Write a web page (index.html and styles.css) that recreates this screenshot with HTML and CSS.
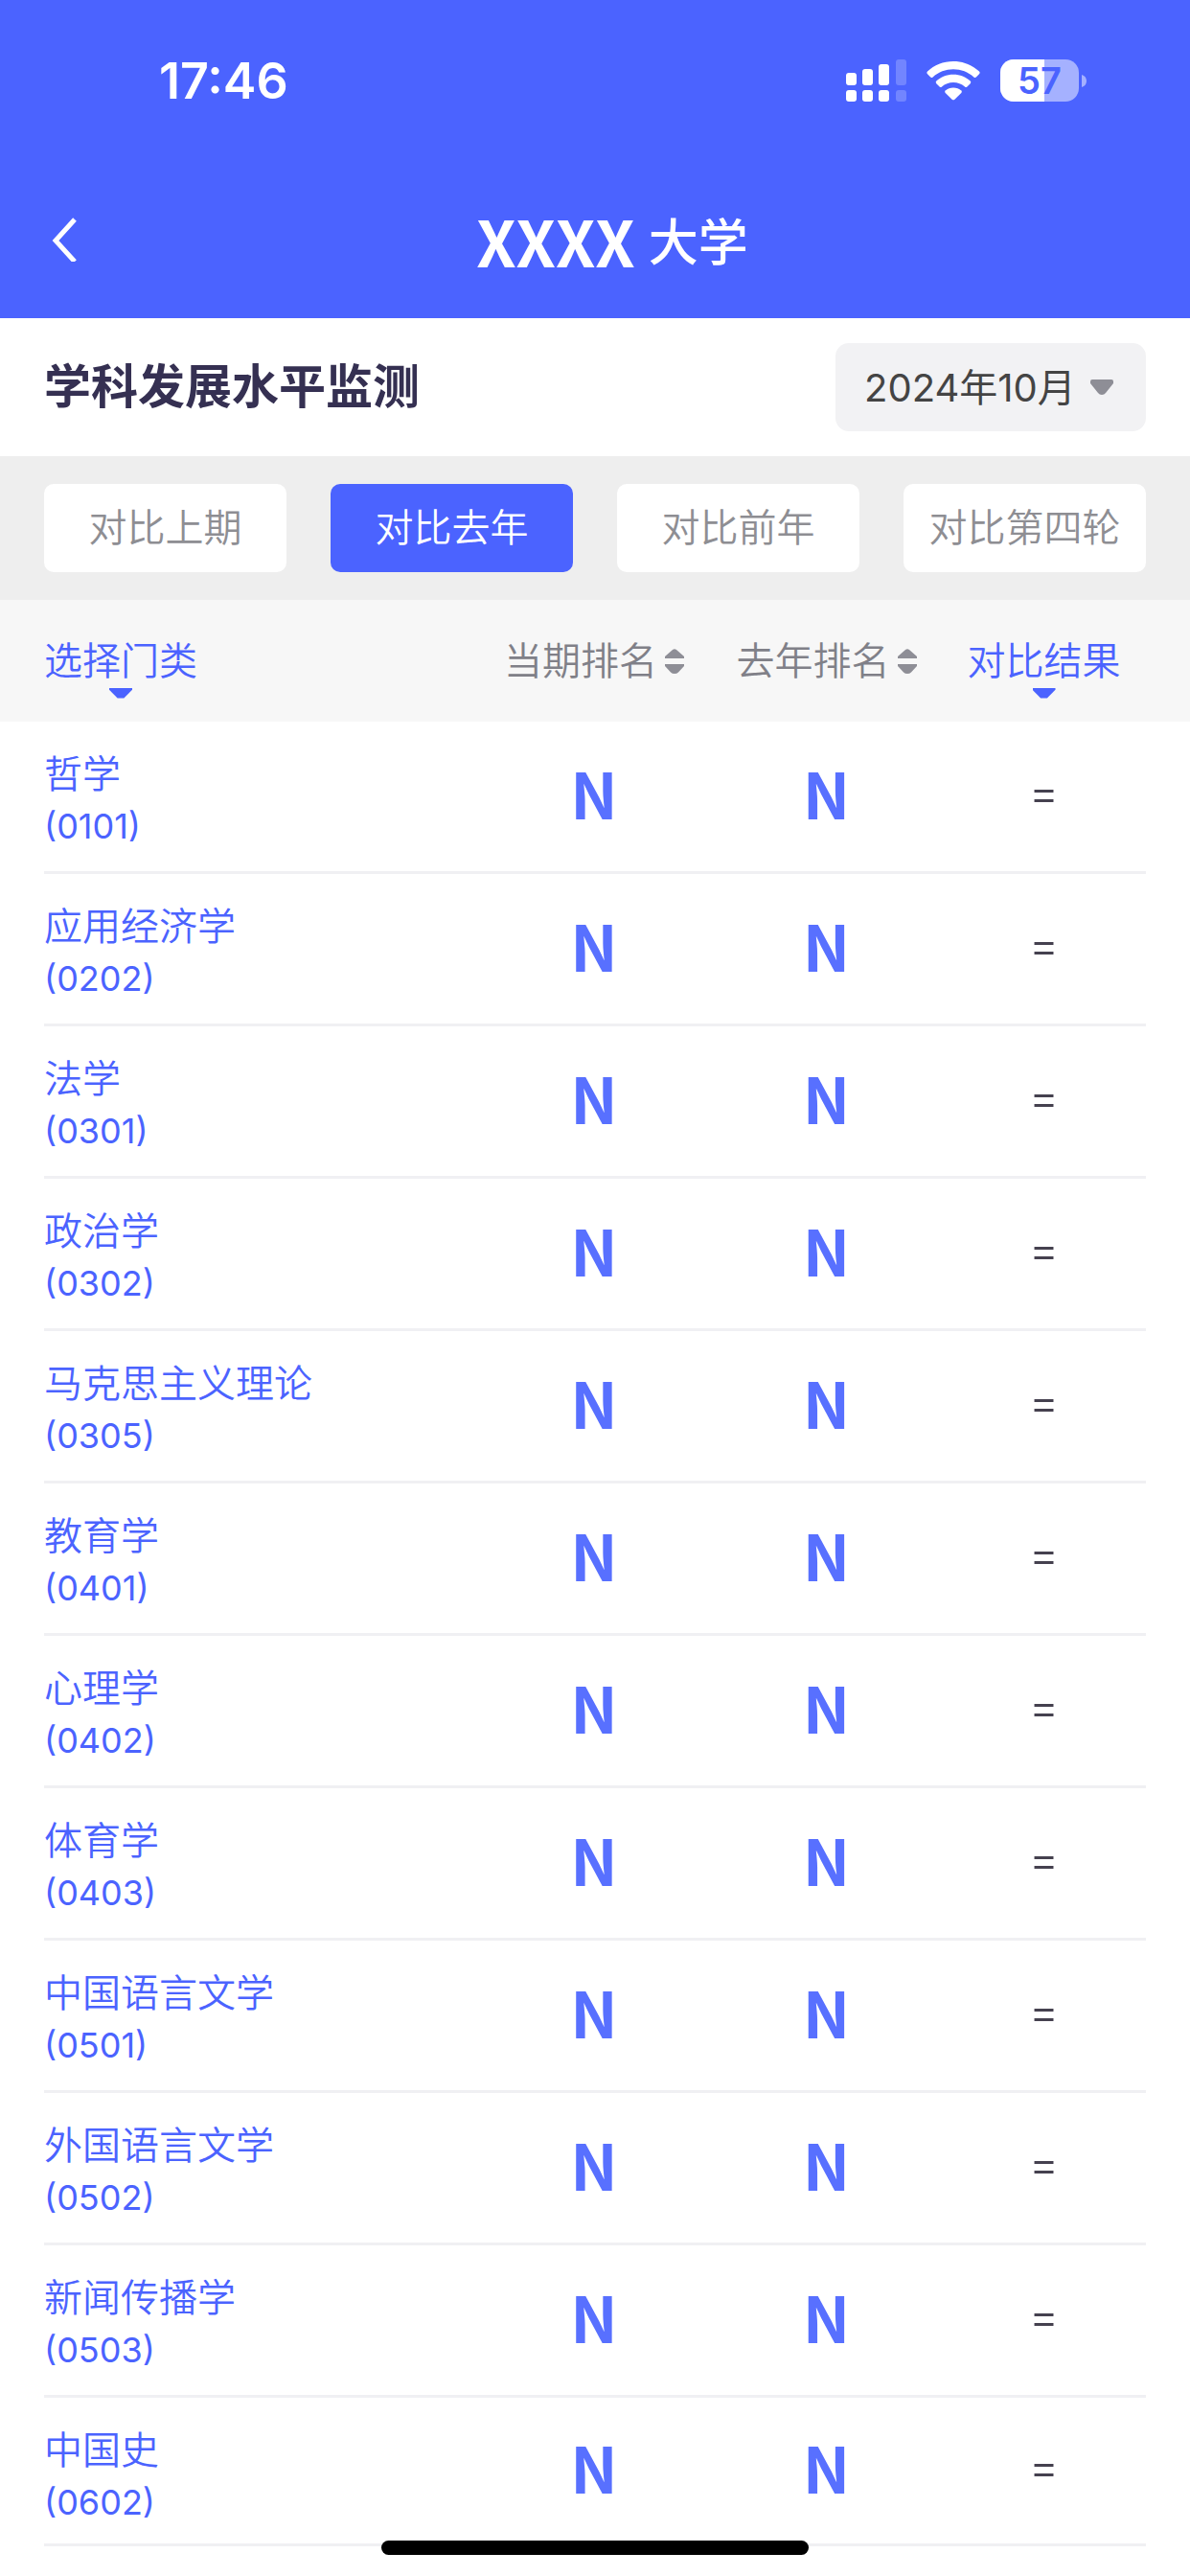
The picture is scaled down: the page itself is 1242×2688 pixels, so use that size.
FILE: index.html
```html
<!DOCTYPE html>
<html lang="zh-CN">
<head>
  <meta charset="UTF-8" />
  <meta name="viewport" content="width=device-width, initial-scale=1.0"/>
  <title>学科发展水平监测</title>
  <link rel="stylesheet" href="styles.css">
</head>
<body>

  <header class="header">
    <!-- Status bar -->
    <div class="status-bar">
      <span class="time">17:46</span>
      <div class="status-icons">
        <svg width="63" height="44" viewBox="0 0 63 44" fill="#fff" aria-hidden="true">
          <rect x="0" y="14" width="11" height="13" rx="3"/>
          <rect x="17" y="10" width="11" height="17" rx="3"/>
          <rect x="34" y="5" width="11" height="22" rx="3"/>
          <rect x="52" y="0" width="11" height="27" rx="3" opacity=".22"/>
          <rect x="0" y="32" width="11" height="12" rx="3"/>
          <rect x="17" y="32" width="11" height="12" rx="3"/>
          <rect x="34" y="32" width="11" height="12" rx="3"/>
          <rect x="52" y="32" width="11" height="12" rx="3" opacity=".22"/>
        </svg>
        <svg width="56" height="42" viewBox="0 0 56 42" fill="#fff" aria-hidden="true">
          <path d="M28 1C17.500 1 8 5 1 11.500Q-.3 12.800 1 14.200L4.200 17.500Q5.400 18.500 6.600 17.400C12.500 12.200 20 9.300 28 9.300S43.500 12.200 49.400 17.400Q50.600 18.500 51.800 17.500L55 14.200Q56.300 12.800 55 11.500C48 5 38.500 1 28 1Z"/>
          <path d="M28 14.800C21 14.800 15 17.300 10.300 21.500Q9 22.800 10.300 24.200L13.600 27.400Q14.800 28.400 16 27.400C19.300 24.600 23.500 23 28 23S36.700 24.600 40 27.400Q41.200 28.400 42.400 27.400L45.700 24.200Q47 22.800 45.700 21.500C41 17.300 35 14.800 28 14.800Z"/>
          <path d="M28 28.500C24.800 28.500 22 29.600 19.700 31.500Q18.500 32.600 19.700 33.900L26.600 40.700Q28 42 29.400 40.700L36.300 33.900Q37.500 32.600 36.300 31.500C34 29.600 31.200 28.500 28 28.500Z"/>
        </svg>
        <svg width="90" height="44" viewBox="0 0 90 44" role="img" aria-label="57%">
          <defs>
            <clipPath id="level"><rect width="46" height="44"/></clipPath>
          </defs>
          <rect width="82" height="44" rx="14" fill="#fff" opacity=".5"/>
          <rect width="82" height="44" rx="14" fill="#fff" clip-path="url(#level)"/>
          <path d="M85 16C88 17 90 19 90 22.500S88 28 85 29Z" fill="#fff" opacity=".5"/>
          <text class="battery-text" x="41" y="36" text-anchor="middle">57</text>
        </svg>
      </div>
    </div>

    <!-- Title bar -->
    <div class="nav-bar">
      <button class="back" type="button" aria-label="返回">
        <svg width="36" height="46" viewBox="0 0 36 46" fill="none" stroke="#fff" stroke-width="5" aria-hidden="true">
          <path d="M32 2L12 24L32 46"/>
        </svg>
      </button>
      <h1><span class="school">XXXX</span> 大学</h1>
    </div>
  </header>

  <main>
    <div class="title-row">
      <h2>学科发展水平监测</h2>
      <div class="month">
        <select aria-label="月份">
          <option>2024年10月</option>
        </select>
        <svg class="month-arrow" width="24" height="16" viewBox="0 0 24 16" fill="#8e8e96" aria-hidden="true">
          <path d="M2 0H22Q24 0 24 2V4L16 14Q14.500 16 12 16T8 14L0 4V2Q0 0 2 0Z"/>
        </svg>
      </div>
    </div>

    <div class="tabs">
      <button type="button">对比上期</button>
      <button type="button" class="active">对比去年</button>
      <button type="button">对比前年</button>
      <button type="button">对比第四轮</button>
    </div>

    <table class="ranking">
      <thead>
        <tr>
          <th><button type="button" class="filter">选择门类</button></th>
          <th>
            <button type="button" class="sort">当期排名
              <svg width="20" height="26" viewBox="0 0 20 26" fill="#8e8e96" aria-hidden="true">
                <path d="M0 10V8L8 1Q10 -.5 12 1L20 8V10ZM0 16H20V18L14 24.500Q12.500 26 10 26T6 24.500L0 18Z"/>
              </svg>
            </button>
          </th>
          <th>
            <button type="button" class="sort">去年排名
              <svg width="20" height="26" viewBox="0 0 20 26" fill="#8e8e96" aria-hidden="true">
                <path d="M0 10V8L8 1Q10 -.5 12 1L20 8V10ZM0 16H20V18L14 24.500Q12.500 26 10 26T6 24.500L0 18Z"/>
              </svg>
            </button>
          </th>
          <th><button type="button" class="filter">对比结果</button></th>
        </tr>
      </thead>
      <tbody>
        <tr>
          <td><a href="#0101">哲学<span>(0101)</span></a></td>
          <td class="rank">N</td>
          <td class="rank">N</td>
          <td class="result">=</td>
        </tr>
        <tr>
          <td><a href="#0202">应用经济学<span>(0202)</span></a></td>
          <td class="rank">N</td>
          <td class="rank">N</td>
          <td class="result">=</td>
        </tr>
        <tr>
          <td><a href="#0301">法学<span>(0301)</span></a></td>
          <td class="rank">N</td>
          <td class="rank">N</td>
          <td class="result">=</td>
        </tr>
        <tr>
          <td><a href="#0302">政治学<span>(0302)</span></a></td>
          <td class="rank">N</td>
          <td class="rank">N</td>
          <td class="result">=</td>
        </tr>
        <tr>
          <td><a href="#0305">马克思主义理论<span>(0305)</span></a></td>
          <td class="rank">N</td>
          <td class="rank">N</td>
          <td class="result">=</td>
        </tr>
        <tr>
          <td><a href="#0401">教育学<span>(0401)</span></a></td>
          <td class="rank">N</td>
          <td class="rank">N</td>
          <td class="result">=</td>
        </tr>
        <tr>
          <td><a href="#0402">心理学<span>(0402)</span></a></td>
          <td class="rank">N</td>
          <td class="rank">N</td>
          <td class="result">=</td>
        </tr>
        <tr>
          <td><a href="#0403">体育学<span>(0403)</span></a></td>
          <td class="rank">N</td>
          <td class="rank">N</td>
          <td class="result">=</td>
        </tr>
        <tr>
          <td><a href="#0501">中国语言文学<span>(0501)</span></a></td>
          <td class="rank">N</td>
          <td class="rank">N</td>
          <td class="result">=</td>
        </tr>
        <tr>
          <td><a href="#0502">外国语言文学<span>(0502)</span></a></td>
          <td class="rank">N</td>
          <td class="rank">N</td>
          <td class="result">=</td>
        </tr>
        <tr>
          <td><a href="#0503">新闻传播学<span>(0503)</span></a></td>
          <td class="rank">N</td>
          <td class="rank">N</td>
          <td class="result">=</td>
        </tr>
        <tr>
          <td><a href="#0602">中国史<span>(0602)</span></a></td>
          <td class="rank">N</td>
          <td class="rank">N</td>
          <td class="result">=</td>
        </tr>
      </tbody>
    </table>
  </main>

  <!-- Home indicator -->
  <div class="home-indicator"></div>

</body>
</html>
```
FILE: styles.css
```css
* {
  box-sizing: border-box;
}

body {
  margin: 0;
  font-family: Inter, "Noto Sans CJK SC", sans-serif;
  font-size: 40px;
  font-weight: 350;
  background: #fff;
}

button, select {
  margin: 0;
  padding: 0;
  border: none;
  background: none;
  font: inherit;
  color: inherit;
  cursor: pointer;
}

svg {
  display: block;
}

/* Header */
.header {
  background: #4b63ff;
  color: #fff;
}

.status-bar {
  display: flex;
  justify-content: space-between;
  align-items: center;
  height: 168px;
  padding: 0 108px 0 166px;
}

.time {
  font-size: 52px;
  font-weight: 600;
}

.status-icons {
  display: flex;
  align-items: center;
  gap: 21px;
}

.battery-text {
  font-size: 38px;
  font-weight: 600;
  fill: #4b63ff;
}

.nav-bar {
  display: flex;
  align-items: center;
  height: 164px;
  padding: 0 46px;
}

h1 {
  flex: 1;
  display: flex;
  justify-content: center;
  align-items: center;
  gap: 14px;
  margin: 0;
  font-family: "Noto Sans CJK SC", sans-serif;
  font-size: 52px;
  font-weight: 500;
  line-height: 72px;
}

.school {
  font-size: 66px;
  font-weight: 700;
}

/* Page title and month */
.title-row {
  display: flex;
  justify-content: space-between;
  align-items: center;
  padding: 26px 46px;
}

h2 {
  margin: 0;
  font-size: 49px;
  font-weight: 700;
  line-height: 60px;
  color: #353052;
}

.month {
  position: relative;
}

.month select {
  appearance: none;
  width: 324px;
  height: 92px;
  padding-left: 30px;
  border-radius: 14px;
  background: #f2f2f4;
  font-weight: 400;
  color: #444;
}

.month-arrow {
  position: absolute;
  right: 34px;
  top: 38px;
  pointer-events: none;
}

/* Comparison tabs */
.tabs {
  display: grid;
  grid-template-columns: repeat(4, 1fr);
  gap: 46px;
  padding: 29px 46px;
  background: #eee;
}

.tabs button {
  height: 92px;
  border-radius: 10px;
  background: #fff;
  line-height: 56px;
  color: #8e8e93;
}

.tabs .active {
  background: #4b63ff;
  color: #fff;
}

/* Ranking table */
.ranking, .ranking thead, .ranking tbody {
  display: block;
}

.ranking tr {
  display: grid;
  grid-template-columns: 452fr 244fr 241fr 213fr;
  align-items: center;
  margin: 0 46px;
}

.ranking thead {
  background: #f7f7f7;
}

.ranking thead tr {
  height: 127px;
}

.ranking th {
  display: flex;
  justify-content: center;
  padding: 0;
  font-weight: 350;
  color: #808088;
}

.ranking th:first-child {
  justify-content: flex-start;
}

.ranking th button {
  line-height: 56px;
}

.filter {
  position: relative;
  color: #4b63ff;
}

.filter::after {
  content: "";
  position: absolute;
  top: 100%;
  left: 50%;
  width: 24px;
  height: 11px;
  margin-left: -12px;
  background: #4b63ff;
  clip-path: polygon(0 0, 100% 0, 100% 20%, 64% 100%, 36% 100%, 0 20%);
}

.sort {
  display: flex;
  align-items: center;
  gap: 8px;
}

.ranking tbody tr {
  border-bottom: 3px solid #f0f0f3;
}

.ranking td {
  padding: 0;
  text-align: center;
}

.ranking td:first-child {
  padding: 28px 0 20px;
  text-align: left;
}

.ranking tr:last-child td:first-child {
  padding-bottom: 16px;
}

.ranking a {
  display: block;
  line-height: 54px;
  color: #4b63ff;
  text-decoration: none;
}

.ranking a span {
  display: block;
  font-size: 36px;
  font-weight: 400;
}

.ranking .rank {
  padding-bottom: 10px;
  font-family: "Noto Sans CJK SC", sans-serif;
  font-size: 66px;
  font-weight: 700;
  line-height: 72px;
  color: #5870ff;
}

.ranking .result {
  padding-bottom: 8px;
  font-size: 49px;
  line-height: 60px;
  color: #45414f;
}

.home-indicator {
  position: fixed;
  left: 50%;
  bottom: 22px;
  width: 446px;
  height: 15px;
  margin-left: -223px;
  border-radius: 8px;
  background: #000;
}
```
